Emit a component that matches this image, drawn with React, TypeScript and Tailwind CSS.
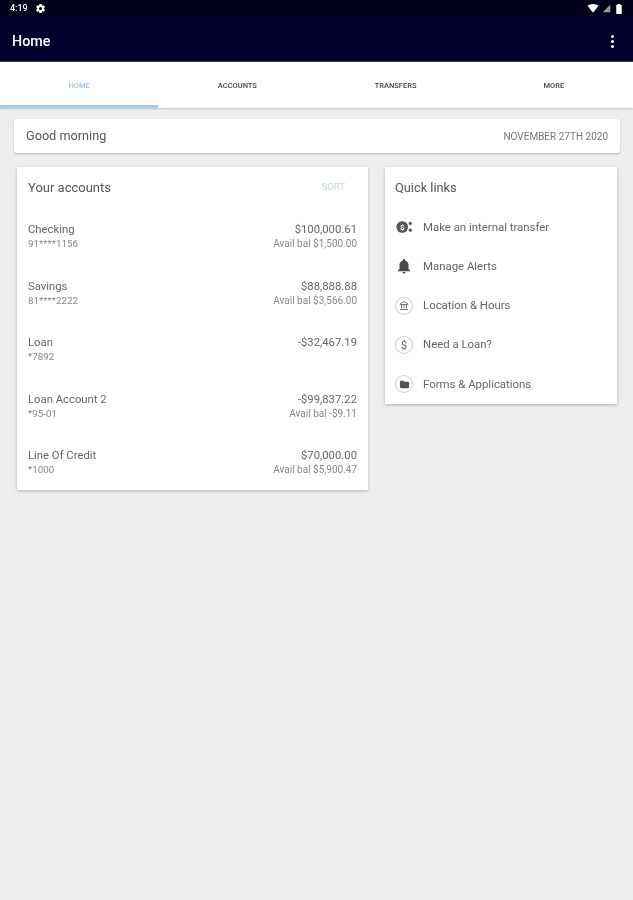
import React from "react";

const accounts = [
  { name: "Checking", number: "91****1156", amount: "$100,000.61", avail: "Avail bal $1,500.00" },
  { name: "Savings", number: "81****2222", amount: "$88,888.88", avail: "Avail bal $3,566.00" },
  { name: "Loan", number: "*7892", amount: "-$32,467.19", avail: "" },
  { name: "Loan Account 2", number: "*95-01", amount: "-$99,837.22", avail: "Avail bal -$9.11" },
  { name: "Line Of Credit", number: "*1000", amount: "$70,000.00", avail: "Avail bal $5,900.47" },
];

const tabs = ["HOME", "ACCOUNTS", "TRANSFERS", "MORE"];

function TransferIcon() {
  return (
    <svg viewBox="0 0 20 20" className="h-[18px] w-[18px]">
      <circle cx="8" cy="10" r="6.500" fill="#555" />
      <text x="8" y="13" textAnchor="middle" fontSize="9" fontWeight="700" fill="#fff" fontFamily="Roboto, sans-serif">$</text>
      <circle cx="17" cy="6" r="1.800" fill="#555" />
      <circle cx="17" cy="13.500" r="1.800" fill="#555" />
    </svg>
  );
}

function BellIcon() {
  return (
    <svg viewBox="0 0 24 24" className="h-5 w-5" fill="#4a4a4a">
      <path d="M12 22c1.100 0 2-.9 2-2h-4c0 1.100.9 2 2 2zm6-6v-5c0-3.070-1.630-5.640-4.500-6.320V4c0-.830-.670-1.500-1.500-1.500s-1.500.670-1.500 1.500v.680C7.640 5.360 6 7.920 6 11v5l-2 2v1h16v-1l-2-2z" />
    </svg>
  );
}

function RingIcon({ children }: { children: React.ReactNode }) {
  return (
    <span className="flex h-[18px] w-[18px] items-center justify-center rounded-full border border-[#cfcfcf]">
      {children}
    </span>
  );
}

const quickLinks = [
  { label: "Make an internal transfer", icon: <TransferIcon /> },
  { label: "Manage Alerts", icon: <BellIcon /> },
  {
    label: "Location & Hours",
    icon: (
      <RingIcon>
        <svg viewBox="0 0 24 24" className="h-[12px] w-[12px]" fill="none" stroke="#777" strokeWidth="2">
          <path d="M12 3 4 8v1h16V8l-8-5zM7 10v7M12 10v7M17 10v7M4 19h16" />
        </svg>
      </RingIcon>
    ),
  },
  {
    label: "Need a Loan?",
    icon: (
      <RingIcon>
        <span className="text-[11px] leading-none text-[#666]">$</span>
      </RingIcon>
    ),
  },
  {
    label: "Forms & Applications",
    icon: (
      <RingIcon>
        <svg viewBox="0 0 24 24" className="h-[11px] w-[11px]" fill="#555">
          <path d="M10 4H4c-1.100 0-2 .9-2 2v12c0 1.100.9 2 2 2h16c1.100 0 2-.9 2-2V8c0-1.100-.9-2-2-2h-8l-2-2z" />
        </svg>
      </RingIcon>
    ),
  },
];

export default function App() {
  return (
    <div className="h-[900px] w-[633px] overflow-hidden bg-[#eeeeee] font-['Roboto',sans-serif] blur-[0.7px]">
      <div className="flex h-[17px] items-center justify-between bg-[#00001a] pl-[10px] pr-[11px] text-white">
        <div className="flex items-center gap-[7px]">
          <span className="text-[9px] font-medium leading-none">4:19</span>
          <svg viewBox="0 0 24 24" className="h-[11px] w-[11px]" fill="#fff">
            <path d="M19.400 13c.04-.32.1-.66.1-1s-.06-.68-.1-1l2.100-1.650a.5.5 0 0 0 .12-.64l-2-3.460a.5.5 0 0 0-.61-.22l-2.490 1a7.300 7.300 0 0 0-1.690-.98l-.38-2.650A.49.49 0 0 0 14 2h-4a.49.49 0 0 0-.49.42l-.38 2.650c-.61.25-1.170.59-1.690.98l-2.490-1a.5.5 0 0 0-.61.22l-2 3.460a.49.49 0 0 0 .12.64L4.570 11c-.04.32-.07.66-.07 1s.03.68.07 1l-2.110 1.650a.5.5 0 0 0-.12.64l2 3.460c.12.22.39.3.61.22l2.490-1c.52.4 1.080.73 1.690.98l.38 2.650c.03.24.24.42.49.42h4c.25 0 .46-.18.49-.42l.38-2.650c.61-.25 1.170-.59 1.690-.98l2.490 1c.22.08.49 0 .61-.22l2-3.460a.5.5 0 0 0-.12-.64L19.400 13zM12 15.500a3.500 3.500 0 1 1 0-7 3.500 3.500 0 0 1 0 7z" />
          </svg>
        </div>
        <div className="flex items-center gap-[3px]">
          <svg viewBox="0 0 24 24" className="h-[11px] w-[12px]" fill="#fff">
            <path d="M12 21 0 6c3.300-2.500 7.500-4 12-4s8.700 1.500 12 4L12 21z" />
          </svg>
          <svg viewBox="0 0 24 24" className="h-[9px] w-[9px]" fill="#9a9a9a">
            <path d="M2 22 22 2v20H2z" />
          </svg>
          <svg viewBox="0 0 12 24" className="ml-[2px] h-[11px] w-[6px]" fill="#fff">
            <path d="M3 2h6v2h2a1 1 0 0 1 1 1v18a1 1 0 0 1-1 1H1a1 1 0 0 1-1-1V5a1 1 0 0 1 1-1h2V2z" />
          </svg>
        </div>
      </div>

      <div className="flex h-[45px] items-center justify-between border-b border-[#3a3a44] bg-[#00002a] pl-3 pr-[19px] pt-[4px] text-white">
        <span className="text-[14.300px] font-medium leading-none">Home</span>
        <span className="flex flex-col gap-[2px]">
          <span className="h-[3px] w-[3px] rounded-full bg-white" />
          <span className="h-[3px] w-[3px] rounded-full bg-white" />
          <span className="h-[3px] w-[3px] rounded-full bg-white" />
        </span>
      </div>

      <div className="grid h-[46px] grid-cols-4 bg-white shadow-[0_1px_2px_rgba(0,0,0,0.18)]">
        {tabs.map((tab, index) => (
          <div
            key={tab}
            className={`flex items-center justify-center border-b-[3px] pt-[4px] text-[7.500px] font-medium ${
              index === 0 ? "border-[#a9c8e4] text-[#9dbfe0]" : "border-transparent text-[#444]"
            }`}
          >
            {tab}
          </div>
        ))}
      </div>

      <div className="ml-[14px] mt-[11px] flex h-[34px] w-[606px] items-center justify-between rounded-[2px] bg-white pl-3 pr-3 shadow-[0_1px_2px_rgba(0,0,0,0.25)]">
        <span className="text-[12.700px] text-[#555]">Good morning</span>
        <span className="text-[10px] text-[#777]">NOVEMBER 27TH 2020</span>
      </div>

      <div className="ml-[17px] mt-[14px] flex w-[600px] items-start gap-[17px]">
        <div className="h-[323px] w-[351px] bg-white px-[11px] pt-[13px] shadow-[0_1px_3px_rgba(0,0,0,0.25)]">
          <div className="flex h-[15px] items-center justify-between">
            <span className="text-[13px] text-[#555]">Your accounts</span>
            <span className="pr-[12px] text-[9.500px] text-[#c5d8ea]">SORT</span>
          </div>
          <div className="mt-[27px] flex flex-col">
            {accounts.map((account) => (
              <div key={account.name} className="flex h-[56.500px] items-start justify-between">
                <div>
                  <div className="h-[15px] text-[11.300px] leading-[15px] text-[#666]">{account.name}</div>
                  <div className="h-[13px] text-[9.800px] leading-[13px] text-[#888]">{account.number}</div>
                </div>
                <div className="text-right">
                  <div className="h-[15px] text-[11.300px] leading-[15px] text-[#666]">{account.amount}</div>
                  <div className="h-[13px] text-[10px] leading-[13px] text-[#888]">{account.avail}</div>
                </div>
              </div>
            ))}
          </div>
        </div>

        <div className="h-[237px] w-[232px] bg-white pl-[10px] pt-[13px] shadow-[0_1px_3px_rgba(0,0,0,0.25)]">
          <div className="flex h-[15px] items-center text-[12.800px] text-[#555]">Quick links</div>
          <div className="mt-[12.500px] flex flex-col">
            {quickLinks.map((link) => (
              <div key={link.label} className="flex h-[39.300px] items-center gap-[10px]">
                <span className="flex w-[18px] items-center justify-center">{link.icon}</span>
                <span className="text-[11.400px] text-[#666]">{link.label}</span>
              </div>
            ))}
          </div>
        </div>
      </div>
    </div>
  );
}
